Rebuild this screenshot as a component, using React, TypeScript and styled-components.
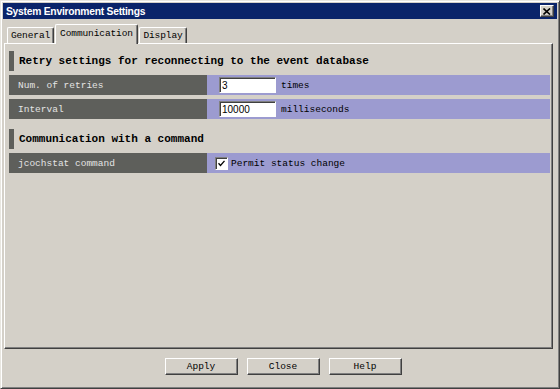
import React from "react";
import styled, { createGlobalStyle } from "styled-components";

const GlobalStyle = createGlobalStyle`
  html, body { margin: 0; padding: 0; background: #d4d0c8; }
  #root { width: 560px; height: 389px; }
`;

const mono = `"Liberation Mono", "Courier New", monospace`;

const Window = styled.div`
  box-sizing: border-box;
  width: 560px;
  height: 389px;
  background: #d4d0c8;
  border: 1px solid;
  border-color: #e8e6e0 #404040 #404040 #e8e6e0;
  box-shadow: inset 1px 1px #ffffff, inset -1px -1px #808080;
  padding: 2px;
  display: flex;
  flex-direction: column;
`;

const TitleBar = styled.div`
  height: 16px;
  background: #0a246a;
  display: flex;
  align-items: center;
  justify-content: space-between;
  padding: 0 3px 0 3px;
`;

const TitleText = styled.span`
  color: #ffffff;
  font-family: "Liberation Sans", Arial, sans-serif;
  font-weight: bold;
  font-size: 10.3px;
  letter-spacing: -0.25px;
`;

const CloseButton = styled.div`
  box-sizing: border-box;
  width: 14px;
  height: 12px;
  background: #d4d0c8;
  border: 1px solid;
  border-color: #ffffff #404040 #404040 #ffffff;
  box-shadow: inset -1px -1px #808080;
  display: flex;
  align-items: center;
  justify-content: center;
`;

const Body = styled.div`
  flex: 1;
  display: flex;
  flex-direction: column;
  padding: 5px 4px 0 1px;
`;

const TabStrip = styled.div`
  height: 19px;
  display: flex;
  align-items: flex-end;
  padding-left: 3px;
  position: relative;
  z-index: 1;
`;

const Tab = styled.div<{ $active?: boolean; $w: number; $ml: number }>`
  box-sizing: border-box;
  width: ${(p) => p.$w}px;
  margin-left: ${(p) => p.$ml}px;
  height: ${(p) => (p.$active ? 20 : 16)}px;
  margin-bottom: ${(p) => (p.$active ? -1 : 0)}px;
  background: #d4d0c8;
  border: 1px solid;
  border-bottom: none;
  border-color: #ffffff #404040 #404040 #ffffff;
  border-radius: 2px 2px 0 0;
  box-shadow: inset -1px 0 #808080;
  font-family: ${mono};
  font-size: 9.5px;
  letter-spacing: -0.1px;
  color: #000;
  display: flex;
  align-items: flex-start;
  justify-content: center;
  padding-top: ${(p) => (p.$active ? 3 : 2)}px;
  line-height: 12px;
  white-space: nowrap;
`;

const Panel = styled.div`
  flex: 1;
  box-sizing: border-box;
  background: #d4d0c8;
  border: 1px solid;
  border-color: #ffffff #404040 #404040 #ffffff;
  box-shadow: inset -1px -1px #808080;
  padding: 7px 2px 0 4px;
  display: flex;
  flex-direction: column;
`;

const Section = styled.div<{ $mt: number }>`
  display: flex;
  flex-direction: column;
  gap: 4px;
  margin-top: ${(p) => p.$mt}px;
`;

const Header = styled.div`
  height: 20px;
  display: flex;
  align-items: center;
  gap: 5px;
  font-family: ${mono};
  font-weight: bold;
  font-size: 11px;
  color: #000;
  &::before {
    content: "";
    width: 5px;
    align-self: stretch;
    background: #5e5f5b;
  }
`;

const Row = styled.div`
  height: 20px;
  display: grid;
  grid-template-columns: 198px 1fr;
`;

const Label = styled.div`
  background: #5e5f5b;
  color: #e4e4e4;
  font-family: ${mono};
  font-size: 9.5px;
  display: flex;
  align-items: center;
  padding-left: 9px;
`;

const Value = styled.div<{ $pl: number; $gap: number }>`
  background: #9c9bd0;
  display: flex;
  align-items: center;
  padding-left: ${(p) => p.$pl}px;
  gap: ${(p) => p.$gap}px;
  font-family: ${mono};
  font-size: 9.5px;
  color: #000;
`;

const TextInput = styled.div`
  box-sizing: border-box;
  width: 57px;
  height: 16px;
  background: #ffffff;
  border: 1px solid;
  border-color: #808080 #ffffff #ffffff #808080;
  box-shadow: inset 1px 1px #404040;
  font-family: "Liberation Sans", Arial, sans-serif;
  font-size: 10px;
  display: flex;
  align-items: center;
  padding-left: 2px;
  color: #000;
`;

const CheckBox = styled.div`
  box-sizing: border-box;
  width: 13px;
  height: 13px;
  background: #ffffff;
  border: 1px solid;
  border-color: #808080 #ffffff #ffffff #808080;
  box-shadow: inset 1px 1px #404040;
  display: flex;
  align-items: center;
  justify-content: center;
`;

const Footer = styled.div`
  height: 37px;
  display: flex;
  justify-content: center;
  align-items: flex-start;
  gap: 9px;
  padding: 9px 0 0 9px;
  box-sizing: border-box;
`;

const Button = styled.div`
  box-sizing: border-box;
  width: 73px;
  height: 17px;
  background: #d4d0c8;
  border: 1px solid;
  border-color: #ffffff #404040 #404040 #ffffff;
  box-shadow: inset -1px -1px #808080;
  font-family: ${mono};
  font-size: 9.5px;
  color: #000;
  display: flex;
  align-items: center;
  justify-content: center;
`;

export default function App() {
  return (
    <>
      <GlobalStyle />
      <Window>
        <TitleBar>
          <TitleText>System Environment Settings</TitleText>
          <CloseButton>
            <svg width="8" height="7" viewBox="0 0 8 7">
              <path d="M0.5 0.5 L7 6.5 M7 0.5 L0.5 6.5" stroke="#000" strokeWidth="1.6" />
            </svg>
          </CloseButton>
        </TitleBar>
        <Body>
          <TabStrip>
            <Tab $w={47} $ml={0}>General</Tab>
            <Tab $w={83} $ml={1} $active>Communication</Tab>
            <Tab $w={48} $ml={1}>Display</Tab>
          </TabStrip>
          <Panel>
            <Section $mt={0}>
              <Header>Retry settings for reconnecting to the event database</Header>
              <Row>
                <Label>Num. of retries</Label>
                <Value $pl={12} $gap={5}>
                  <TextInput>3</TextInput>
                  times
                </Value>
              </Row>
              <Row>
                <Label>Interval</Label>
                <Value $pl={12} $gap={5}>
                  <TextInput>10000</TextInput>
                  milliseconds
                </Value>
              </Row>
            </Section>
            <Section $mt={10}>
              <Header>Communication with a command</Header>
              <Row>
                <Label>jcochstat command</Label>
                <Value $pl={8} $gap={3}>
                  <CheckBox>
                    <svg width="9" height="9" viewBox="0 0 9 9">
                      <path d="M1.5 4.2 L3.5 6.5 L7.5 1.8" stroke="#000" strokeWidth="1.3" fill="none" />
                    </svg>
                  </CheckBox>
                  Permit status change
                </Value>
              </Row>
            </Section>
          </Panel>
          <Footer>
            <Button>Apply</Button>
            <Button>Close</Button>
            <Button>Help</Button>
          </Footer>
        </Body>
      </Window>
    </>
  );
}
